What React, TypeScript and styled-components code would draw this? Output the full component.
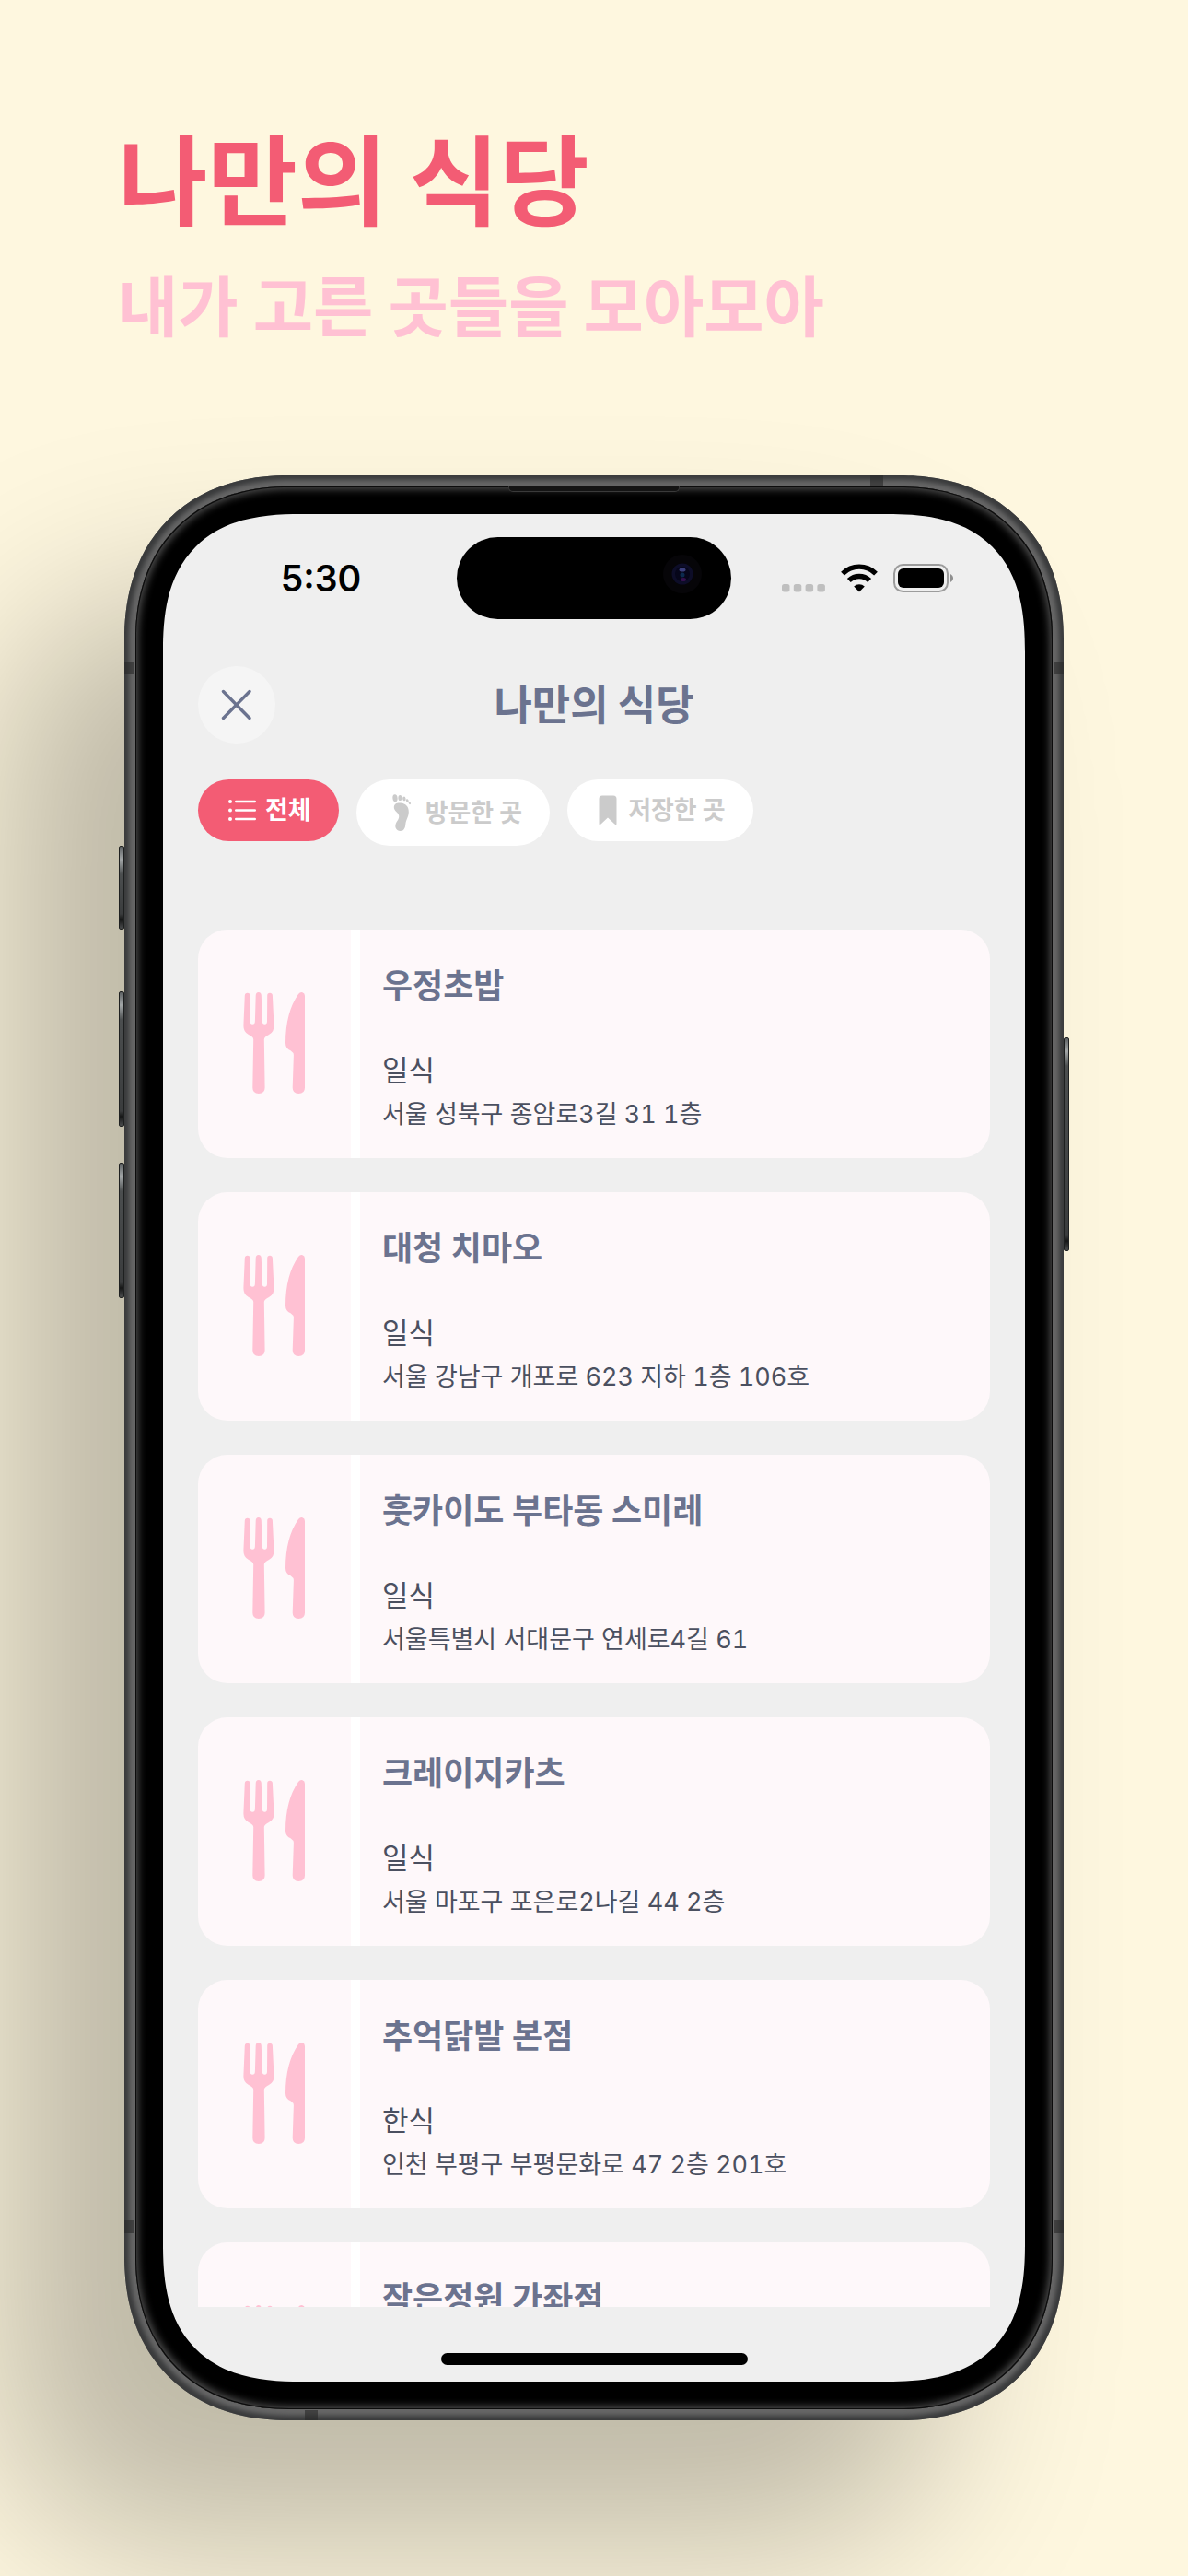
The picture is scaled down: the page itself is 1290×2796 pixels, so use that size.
import React from "react";
import styled, { createGlobalStyle } from "styled-components";

const font = `Inter, "Noto Sans CJK KR", sans-serif`;
const koreanFont = `"Noto Sans CJK KR", sans-serif`;

const GlobalStyle = createGlobalStyle`
  *, *::before, *::after { box-sizing: border-box; }
  body {
    margin: 0;
    background: #fef7df;
    font-family: ${font};
  }
  h1, h2, h3, p, ul { margin: 0; padding: 0; }
  ul { list-style: none; }
  button { border: 0; font: inherit; cursor: pointer; }
`;

const Page = styled.main`
  display: flex;
  flex-direction: column;
  min-height: 100vh;
  padding: 120px 0 169px;
  overflow: hidden;
`;

const Intro = styled.header`
  padding: 0 128px 141px;
  font-family: ${koreanFont};
  white-space: nowrap;
`;

const Headline = styled.h1`
  font-size: 106px;
  font-weight: 700;
  line-height: 140px;
  color: #f35c74;
`;

const Tagline = styled.p`
  padding-top: 21px;
  font-size: 71px;
  font-weight: 700;
  line-height: 94px;
  color: #ffc1d3;
`;

const Phone = styled.section`
  position: relative;
  flex: 1;
  display: flex;
  margin: 0 135px;
  padding: 12px;
  border-radius: 164px;
  background: #666;
  box-shadow: inset 0 0 5px 5px #3a3b3c;

  @supports (corner-shape: superellipse(1.15)) {
    border-radius: 178px;
    corner-shape: superellipse(1.15);
  }

  &::before {
    content: "";
    position: absolute;
    inset: 0;
    z-index: -1;
    border-radius: 170px;
    box-shadow: -135px 135px 190px rgba(0, 0, 0, 0.25);
  }
`;

const Bezel = styled.div`
  flex: 1;
  display: flex;
  min-width: 0;
  padding: 30px;
  border-radius: 152px;
  background: #000;
  box-shadow: inset 0 0 0 1px #0c0c0c, inset 0 0 9px 3px #505050;

  @supports (corner-shape: superellipse(1.15)) {
    border-radius: 166px;
    corner-shape: superellipse(1.15);
  }
`;

const SideButton = styled.span<{ $side: "left" | "right"; $top: number; $length: number }>`
  position: absolute;
  top: ${(p) => p.$top}px;
  ${(p) => p.$side}: -6px;
  width: 6px;
  height: ${(p) => p.$length}px;
  border-radius: 2px;
  border: 1px solid #1e2020;
  background: linear-gradient(#5d6163, #a3a7a8 14px, #4b4e4f 30px, #3a3c3d calc(100% - 16px), #151616 calc(100% - 10px), #4b4d4e);
`;

const Antenna = styled.span<{ $edge: "top" | "bottom" | "left" | "right"; $at: string }>`
  position: absolute;
  background: rgba(40, 40, 40, 0.6);
  ${(p) => p.$edge}: 0;
  ${(p) =>
    p.$edge === "left" || p.$edge === "right"
      ? `top: ${p.$at}; width: 11px; height: 14px;`
      : `left: ${p.$at}; width: 14px; height: 11px;`}
`;

const Earpiece = styled.span`
  position: absolute;
  top: 12px;
  left: 50%;
  width: 186px;
  height: 6px;
  margin-left: -93px;
  border: 1px solid #3a3a3a;
  border-top: 0;
  border-radius: 0 0 5px 5px;
  background: #141414;
`;

const Screen = styled.div`
  position: relative;
  flex: 1;
  display: flex;
  flex-direction: column;
  min-width: 0;
  padding: 0 38px;
  border-radius: 120px;
  overflow: hidden;
  background: #efefef;

  @supports (corner-shape: superellipse(1.36)) {
    border-radius: 150px;
    corner-shape: superellipse(1.36);
  }
`;

const StatusBar = styled.div`
  display: grid;
  grid-template-columns: 1fr 298px 1fr;
  align-items: center;
  padding-top: 25px;
`;

const Clock = styled.time`
  justify-self: center;
  padding-right: 14px;
  font-size: 39px;
  font-weight: 600;
  line-height: 48px;
  color: #000;
`;

const Island = styled.div`
  display: flex;
  align-items: center;
  justify-content: flex-end;
  height: 89px;
  padding: 0 31px 10px;
  border-radius: 45px;
  background: #000;
`;

const Indicators = styled.div`
  display: flex;
  align-items: center;
  justify-content: flex-end;
  gap: 17px;
  padding-right: 39px;
`;

const TitleBar = styled.div`
  display: grid;
  grid-template-columns: 84px 1fr 84px;
  align-items: center;
  padding-top: 51px;
`;

const CloseButton = styled.button`
  display: grid;
  place-items: center;
  width: 84px;
  height: 84px;
  padding: 0;
  border-radius: 50%;
  background: #f5f5f5;
  color: #6b738f;
`;

const ScreenTitle = styled.h2`
  padding-bottom: 4px;
  font-family: ${koreanFont};
  font-size: 45px;
  font-weight: 700;
  line-height: 60px;
  text-align: center;
  color: #6b738f;
`;

const Filters = styled.div`
  display: flex;
  align-items: flex-start;
  gap: 19px;
  padding-top: 39px;
`;

const Chip = styled.button<{ $active?: boolean }>`
  display: flex;
  align-items: center;
  gap: 10px;
  padding: 16px 30px;
  border-radius: 36px;
  font-family: ${koreanFont};
  font-size: 27px;
  font-weight: 700;
  white-space: nowrap;
  background: ${(p) => (p.$active ? "#f35c74" : "#fff")};
  color: ${(p) => (p.$active ? "#fff" : "#cbcbcb")};
`;

const ChipLabel = styled.span`
  padding-bottom: 4px;
  line-height: 31px;
`;

const List = styled.ul`
  flex: 1 1 0;
  display: flex;
  flex-direction: column;
  gap: 37px;
  min-height: 0;
  margin-top: 91px;
  overflow: hidden;
`;

const Card = styled.li`
  flex: none;
  display: grid;
  grid-template-columns: 176px 1fr;
  height: 248px;
  border-radius: 32px;
  overflow: hidden;
  background: #fef8fa;
`;

const Thumb = styled.div`
  display: grid;
  place-items: center;
  padding-bottom: 2px;
  border-right: 10px solid #fff;
`;

const Info = styled.div`
  padding: 37px 24px 0;
  color: #4b5060;
  white-space: nowrap;
`;

const Name = styled.h3`
  padding-bottom: 44px;
  font-size: 36px;
  font-weight: 700;
  line-height: 48px;
  color: #6b738f;
`;

const Kind = styled.p`
  font-size: 31px;
  line-height: 48px;
`;

const Address = styled.p`
  font-size: 27px;
  font-variant-numeric: tabular-nums;
  line-height: 48px;
`;

const HomeArea = styled.div`
  display: flex;
  justify-content: center;
  padding: 50px 0 18px;
`;

const HomeBar = styled.span`
  width: 333px;
  height: 13px;
  border-radius: 7px;
  background: #000;
`;

const CameraLens = () => (
  <svg width="44" height="44" viewBox="0 0 44 44" aria-hidden="true">
    <circle cx="22" cy="22" r="21" fill="#060508" />
    <circle cx="22" cy="22" r="11.5" fill="#0d0d28" />
    <circle cx="22" cy="22" r="8" fill="#06061a" />
    <ellipse cx="22" cy="17.5" rx="3.5" ry="2" fill="#3b3f7c" />
    <ellipse cx="23" cy="28" rx="3" ry="2" fill="#35104e" />
    <circle cx="22" cy="23" r="2.5" fill="#0b2a4e" />
  </svg>
);

const SignalDots = () => (
  <svg width="47" height="31" viewBox="0 0 47 31" aria-hidden="true" fill="#bfbfbf">
    {[0, 12.8, 25.6, 38.4].map((x) => (
      <rect key={x} x={x} y="22" width="8.5" height="8.5" rx="2.5" />
    ))}
  </svg>
);

const WifiIcon = () => (
  <svg width="40" height="31" viewBox="0 0 40 31" aria-hidden="true" fill="none" stroke="#000" strokeWidth="5.4">
    <path d="M2 10.6 A25.5 25.5 0 0 1 38 10.6" />
    <path d="M8.8 18 A16 16 0 0 1 31.2 18" />
    <path d="M20 30.5 L14.2 24.6 A8.4 8.4 0 0 1 25.8 24.6 Z" fill="#000" stroke="none" />
  </svg>
);

const BatteryIcon = () => (
  <svg width="66" height="31" viewBox="0 0 66 31" aria-hidden="true">
    <rect x="1" y="1" width="58" height="29" rx="9.5" fill="none" stroke="#9c9c9c" strokeWidth="2" />
    <rect x="5" y="5" width="50" height="21" rx="6" fill="#000" />
    <path d="M62 11 C66 13 66 18 62 20 Z" fill="#8f8f8f" />
  </svg>
);

const CloseIcon = () => (
  <svg width="34" height="34" viewBox="0 0 34 34" aria-hidden="true" stroke="currentColor" strokeWidth="3.4" strokeLinecap="round">
    <path d="M2.5 2.5 L31 31.5 M31 2.5 L2.5 31.5" />
  </svg>
);

const ListIcon = () => (
  <svg width="33" height="23" viewBox="-2 0 33 23" aria-hidden="true" fill="currentColor">
    {[2, 11.5, 21].map((y) => (
      <g key={y}>
        <circle cx="3" cy={y} r="2" />
        <rect x="8" y={y - 1.2} width="23" height="2.4" rx="1.2" />
      </g>
    ))}
  </svg>
);

const FootIcon = () => (
  <svg width="35" height="40" viewBox="-9 0 35 40" aria-hidden="true" fill="currentColor">
    <ellipse cx="3" cy="4.2" rx="2.6" ry="4" transform="rotate(-6 3 4.200)" />
    <ellipse cx="8.4" cy="4" rx="2" ry="3.1" />
    <ellipse cx="12.9" cy="5" rx="1.7" ry="2.4" transform="rotate(-12 12.9 5)" />
    <ellipse cx="16.3" cy="7" rx="1.3" ry="1.9" transform="rotate(-20 16.3 7)" />
    <ellipse cx="18.8" cy="9.6" rx="1.1" ry="1.6" transform="rotate(-25 18.8 9.6)" />
    <path d="M1.8 14 C2 10.500 5 9.200 9 9.600 C14.500 10.200 18 13.500 17.800 19.500 C17.600 25 14.800 27.500 14.300 33 C13.900 37.500 12.200 40 8.600 39.900 C4.500 39.700 2.600 36.500 3.600 32.800 C4.600 29 7.600 27.500 7.200 23.500 C6.800 19.800 1.600 18.500 1.800 14 Z" />
  </svg>
);

const BookmarkIcon = () => (
  <svg width="26" height="33" viewBox="-4 0 26 33" aria-hidden="true" fill="currentColor">
    <path d="M4 0.5 H16 Q19.5 0.5 19.5 4 V31 Q19.5 33.5 17.5 31.6 L10 24.5 L2.5 31.6 Q0.5 33.5 0.5 31 V4 Q0.5 0.5 4 0.5 Z" />
  </svg>
);

const CutleryIcon = () => (
  <svg width="68" height="110" viewBox="0 0 68 110" aria-hidden="true" fill="#ffc1d3">
    <path d="M1.8 3.5 Q2 0.8 4.7 0.8 Q7.5 0.8 7.6 3.5 L7.6 31.5 Q7.7 34.8 10.2 34.8 Q12.8 34.8 12.9 31.5 L13.7 3.5 Q13.8 0 16.7 0 Q19.7 0 19.8 3.5 L20.8 31.5 Q20.9 34.8 23.4 34.8 Q26 34.8 26 31.5 L26.2 3.5 Q26.3 0.8 29 0.8 Q31.7 0.8 31.9 3.5 L33.5 36 Q33.8 43 28 46 Q23 48.5 22.8 51 L23.6 103.5 Q23.6 110 16.9 110 Q10.3 110 10.3 103.5 L11.2 51 Q11.2 48.5 6 46 Q0.2 43 0.4 36 Z" />
    <path d="M67 4 V103.5 Q67 110 60.3 110 Q53.7 110 53.7 103.5 L54.9 68 Q54.8 65.5 51.5 63.3 Q46 61 46 55 Q46 22 60 2 Q62 -0.5 64.5 0.2 Q67 1 67 4 Z" />
  </svg>
);

interface Restaurant {
  name: string;
  kind: string;
  address: string;
}

const restaurants: Restaurant[] = [
  { name: "우정초밥", kind: "일식", address: "서울 성북구 종암로3길 31 1층" },
  { name: "대청 치마오", kind: "일식", address: "서울 강남구 개포로 623 지하 1층 106호" },
  { name: "훗카이도 부타동 스미레", kind: "일식", address: "서울특별시 서대문구 연세로4길 61" },
  { name: "크레이지카츠", kind: "일식", address: "서울 마포구 포은로2나길 44 2층" },
  { name: "추억닭발 본점", kind: "한식", address: "인천 부평구 부평문화로 47 2층 201호" },
  { name: "작은정원 가좌점", kind: "", address: "" },
];

const RestaurantCard = ({ name, kind, address }: Restaurant) => (
  <Card>
    <Thumb>
      <CutleryIcon />
    </Thumb>
    <Info>
      <Name>{name}</Name>
      <Kind>{kind}</Kind>
      <Address>{address}</Address>
    </Info>
  </Card>
);

export default function App() {
  return (
    <>
      <GlobalStyle />
      <Page>
        <Intro>
          <Headline>나만의 식당</Headline>
          <Tagline>내가 고른 곳들을 모아모아</Tagline>
        </Intro>
        <Phone>
          <SideButton $side="left" $top={402} $length={91} />
          <SideButton $side="left" $top={560} $length={147} />
          <SideButton $side="left" $top={746} $length={147} />
          <SideButton $side="right" $top={610} $length={232} />
          <Antenna $edge="top" $at="calc(100% - 210px)" />
          <Antenna $edge="left" $at="202px" />
          <Antenna $edge="right" $at="202px" />
          <Antenna $edge="left" $at="calc(100% - 217px)" />
          <Antenna $edge="right" $at="calc(100% - 217px)" />
          <Antenna $edge="bottom" $at="196px" />
          <Bezel>
            <Screen>
              <StatusBar>
                <Clock>5:30</Clock>
                <Island>
                  <CameraLens />
                </Island>
                <Indicators>
                  <SignalDots />
                  <WifiIcon />
                  <BatteryIcon />
                </Indicators>
              </StatusBar>
              <TitleBar>
                <CloseButton aria-label="닫기">
                  <CloseIcon />
                </CloseButton>
                <ScreenTitle>나만의 식당</ScreenTitle>
              </TitleBar>
              <Filters>
                <Chip $active>
                  <ListIcon />
                  <ChipLabel>전체</ChipLabel>
                </Chip>
                <Chip>
                  <FootIcon />
                  <ChipLabel>방문한 곳</ChipLabel>
                </Chip>
                <Chip>
                  <BookmarkIcon />
                  <ChipLabel>저장한 곳</ChipLabel>
                </Chip>
              </Filters>
              <List>
                {restaurants.map((r) => (
                  <RestaurantCard key={r.name} {...r} />
                ))}
              </List>
              <HomeArea>
                <HomeBar />
              </HomeArea>
            </Screen>
          </Bezel>
          <Earpiece />
        </Phone>
      </Page>
    </>
  );
}
